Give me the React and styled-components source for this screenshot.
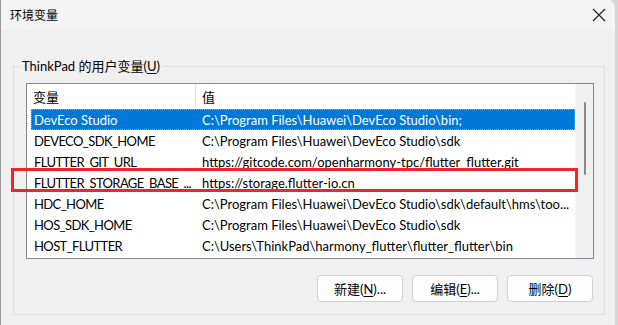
import styled, { createGlobalStyle } from "styled-components";

const rows = [
    { id: 1, name: 'DevEco Studio', value: 'C:\\Program Files\\Huawei\\DevEco Studio\\bin;', selected: true },
    { id: 2, name: 'DEVECO_SDK_HOME', value: 'C:\\Program Files\\Huawei\\DevEco Studio\\sdk' },
    { id: 3, name: 'FLUTTER_GIT_URL', value: 'https://gitcode.com/openharmony-tpc/flutter_flutter.git' },
    { id: 4, name: 'FLUTTER_STORAGE_BASE_...', value: 'https://storage.flutter-io.cn', marked: true },
    { id: 5, name: 'HDC_HOME', value: 'C:\\Program Files\\Huawei\\DevEco Studio\\sdk\\default\\hms\\too...' },
    { id: 6, name: 'HOS_SDK_HOME', value: 'C:\\Program Files\\Huawei\\DevEco Studio\\sdk' },
    { id: 7, name: 'HOST_FLUTTER', value: 'C:\\Users\\ThinkPad\\harmony_flutter\\flutter_flutter\\bin' }
];

const FONT = `"Lato", "Noto Sans CJK SC", sans-serif`;

const GlobalStyle = createGlobalStyle`
    html, body {
        margin: 0;
        padding: 0;
        background: #d6d6d6;
    }
    body {
        font-family: ${FONT};
        font-size: 13px;
        color: #000;
    }
`;

const WindowStyle = styled.div`
    width: 614px;
    height: 325px;
    background: #f0f0f0;
    border-left: 1px solid #9a9a9a;
    border-top-right-radius: 8px;
    display: flex;
    flex-direction: column;
    overflow: hidden;
`;

const TitleBar = styled.div`
    height: 30px;
    background: #f3f3f3;
    display: flex;
    align-items: center;
    justify-content: space-between;
    padding: 0 9px 0 9px;
    flex-shrink: 0;

    & span {
        font-size: 12px;
        padding-bottom: 1px;
    }
`;

const CloseButton = styled.div`
    width: 14px;
    height: 14px;
    display: flex;
`;

const Body = styled.div`
    padding: 26px 0 0 12px;
`;

const GroupBox = styled.fieldset`
    margin: 0;
    min-width: 0;
    width: 592px;
    box-sizing: border-box;
    border: 1px solid #dcdcdc;
    padding: 7px 10px 12px 12px;

    & legend {
        padding: 0 2px;
        margin-left: -6px;
        line-height: 20px;
        font-size: 13px;
    }
`;

const Accel = styled.u`
    text-underline-offset: 2px;
`;

const ListView = styled.div`
    border: 1px solid #828790;
    background: #fff;
    height: 174px;
    display: flex;
    min-width: 0;
`;

const ListContent = styled.div`
    flex: 1;
    min-width: 0;
    padding-left: 4px;
    display: flex;
    flex-direction: column;
`;

const HeaderRow = styled.div`
    height: 25px;
    display: flex;
    align-items: center;
`;

const HeaderCell = styled.div`
    width: ${({ $w }) => $w || 'auto'};
    flex: ${({ $w }) => ($w ? 'none' : '1')};
    height: 100%;
    display: flex;
    align-items: center;
    padding-left: ${({ $pl }) => $pl};
    box-sizing: border-box;
    border-right: ${({ $sep }) => ($sep ? '1px solid #e5e5e5' : 'none')};
`;

const Row = styled.div`
    position: relative;
    height: 21px;
    display: flex;
    align-items: center;
    background: ${({ $selected }) => ($selected ? '#0078d7' : 'transparent')};
    color: ${({ $selected }) => ($selected ? '#fff' : '#000')};
    outline: ${({ $selected }) => ($selected ? '1px dotted #f39a3c' : 'none')};
    outline-offset: -1px;
`;

const Cell = styled.div`
    width: ${({ $w }) => $w || 'auto'};
    flex: ${({ $w }) => ($w ? 'none' : '1')};
    min-width: 0;
    padding-left: ${({ $pl }) => $pl};
    letter-spacing: ${({ $tight }) => ($tight ? '-0.6px' : 'normal')};
    box-sizing: border-box;
    white-space: nowrap;
    overflow: hidden;
`;

const Highlight = styled.div`
    position: absolute;
    top: -4px;
    left: -20px;
    right: -3px;
    height: 24px;
    box-sizing: border-box;
    border: 3px solid #f5222d;
    pointer-events: none;
`;

const ScrollBar = styled.div`
    width: 18px;
    flex-shrink: 0;
    background: #f0f0f0;
    border-left: 1px solid #f7f7f7;
    display: flex;
    justify-content: center;
    padding-top: 18px;
    box-sizing: border-box;

    & div {
        width: 2px;
        height: 73px;
        background: #8a8a8a;
        border-radius: 1px;
    }
`;

const ButtonRow = styled.div`
    display: flex;
    justify-content: flex-end;
    gap: 9px;
    margin-top: 16px;
    padding-right: 1px;
`;

const Button = styled.button`
    width: 86px;
    height: 27px;
    border: 1px solid #d0d0d0;
    border-radius: 4px;
    background: #fdfdfd;
    font-family: ${FONT};
    font-size: 13px;
    color: #000;
    padding: 0;
`;

export default function App() {
    return (
        <>
            <GlobalStyle />
            <WindowStyle>
                <TitleBar>
                    <span>环境变量</span>
                    <CloseButton>
                        <svg width="14" height="14" viewBox="0 0 14 14">
                            <path d="M1 1 L13 13 M13 1 L1 13" stroke="#1a1a1a" strokeWidth="1.1" />
                        </svg>
                    </CloseButton>
                </TitleBar>
                <Body>
                    <GroupBox>
                        <legend>ThinkPad 的用户变量(<Accel>U</Accel>)</legend>
                        <ListView>
                            <ListContent>
                                <HeaderRow>
                                    <HeaderCell $w="165px" $pl="2px" $sep>变量</HeaderCell>
                                    <HeaderCell $pl="6px">值</HeaderCell>
                                </HeaderRow>
                                {rows.map((row) => (
                                    <Row key={row.id} $selected={row.selected}>
                                        <Cell $w="165px" $pl="3px" $tight={row.name === row.name.toUpperCase()}>
                                            {row.name}
                                        </Cell>
                                        <Cell $pl="6px">{row.value}</Cell>
                                        {row.marked && <Highlight />}
                                    </Row>
                                ))}
                            </ListContent>
                            <ScrollBar><div /></ScrollBar>
                        </ListView>
                        <ButtonRow>
                            <Button>新建(<Accel>N</Accel>)...</Button>
                            <Button>编辑(<Accel>E</Accel>)...</Button>
                            <Button>删除(<Accel>D</Accel>)</Button>
                        </ButtonRow>
                    </GroupBox>
                </Body>
            </WindowStyle>
        </>
    );
}
